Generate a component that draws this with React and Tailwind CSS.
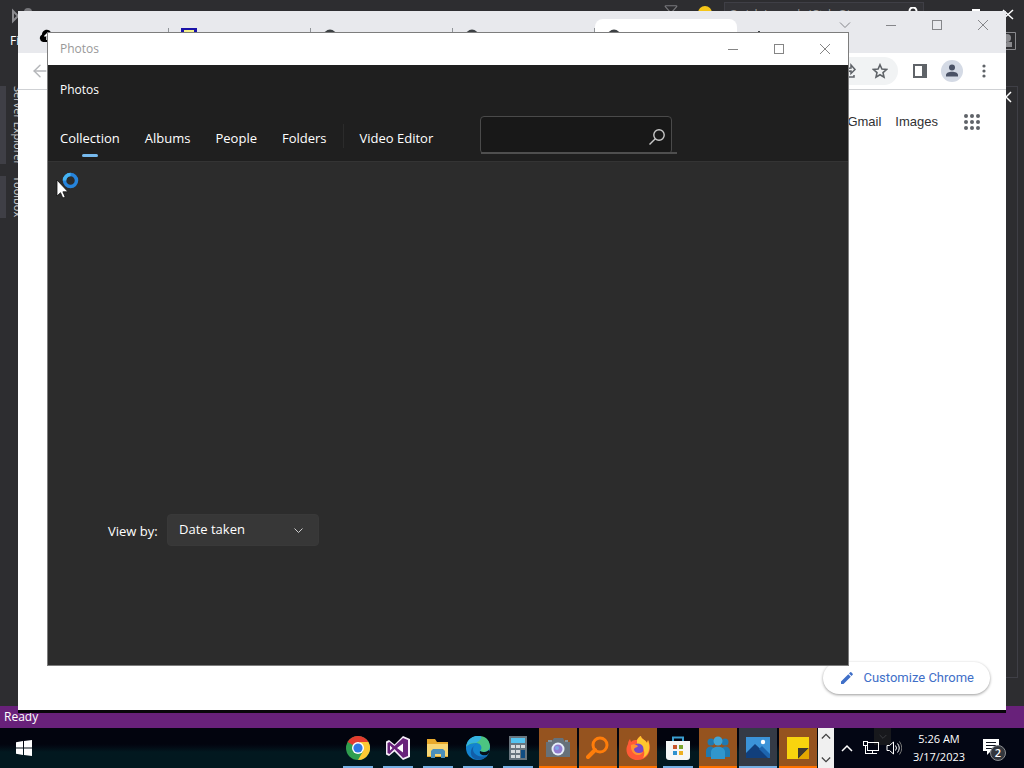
import React from "react";
import clsx from "clsx";
import { ArrowLeft, Filter } from "lucide-react";

const CaptionIcon = ({ type }) => (
  <svg width="12" height="12" viewBox="0 0 12 12" fill="none" stroke="currentColor" shapeRendering={type === "close" || type === "menu" ? "auto" : "crispEdges"}>
    {type === "menu" && <path d="M1 3.5l5 5 5-5" />}
    {type === "minimize" && <path d="M1 6.5h10" />}
    {type === "maximize" && <path d="M1.5 1.5h9v9h-9z" />}
    {type === "close" && <path d="M1 1l10 10M11 1L1 11" />}
  </svg>
);

const CaptionButtons = ({ types, className }) => (
  <div className={clsx("ml-auto flex", className)}>
    {types.map((type) => (
      <button key={type} aria-label={type} className="flex w-[46px] items-center justify-center">
        <CaptionIcon type={type} />
      </button>
    ))}
  </div>
);

/* ---------- Visual Studio, behind everything ---------- */

const sideTabs = [
  { label: "Server Explorer", height: "h-[78px]" },
  { label: "Toolbox", height: "h-[42px]" },
];

const StudioWindow = () => (
  <div className="flex min-h-0 flex-1 flex-col bg-[#2d2d30] text-white">
    <div className="flex h-7 items-start pl-3">
      <svg className="mt-2 h-4 w-6" viewBox="0 0 24 16" fill="none" stroke="#8b8b8f" strokeWidth="2">
        <path d="M1 3v10l5-5zM7 3v10" />
        <circle cx="16" cy="4" r="4" fill="#77777b" stroke="none" />
      </svg>
      <div className="ml-auto flex items-start">
        <Filter className="mt-1 mr-5 h-3.5 w-3.5 text-[#77777b]" />
        <span className="mt-1.5 mr-3 h-3.5 w-3.5 rounded-full bg-[#f5c518]" />
        <div className="mt-[2px] flex h-6 w-[200px] items-start justify-between border border-[#3f3f46] bg-[#333337] px-1 pt-1">
          <span className="text-[12px] leading-4 text-[#999999]">Quick Launch (Ctrl+Q)</span>
          <svg width="12" height="12" viewBox="0 0 12 12" fill="none" stroke="#fff" strokeWidth="2">
            <circle cx="6" cy="4" r="3.5" />
            <path d="M3 7l-3 4" />
          </svg>
        </div>
        <span className="mt-[9px] ml-12 h-2 w-2 border-t-2 border-white" />
        <svg className="mt-2 mr-2.5 ml-[22px]" width="12" height="12" viewBox="0 0 12 12" fill="none" stroke="#fff" strokeWidth="1.5">
          <path d="M1 2l10 9M11 2L1 11" />
        </svg>
      </div>
    </div>
    <div className="flex h-[58px] items-start justify-between pt-1 pl-2.5 text-[12px] leading-[18px]">
      <span>File</span>
      <svg className="mr-2" width="18" height="18" viewBox="0 0 18 18">
        <path d="M1 .5h16.500v17H1" fill="none" stroke="#8a8a8e" />
        <circle cx="9" cy="6" r="4" fill="#8a8a8e" />
        <path d="M5 15v-3l4-2h5v5z" fill="#8a8a8e" />
      </svg>
    </div>
    <div className="flex flex-1">
      <div className="flex flex-col gap-3">
        {sideTabs.map(({ label, height }) => (
          <div key={label} className={clsx("flex border-l-[6px] border-[#3f3f46] pl-1", height)}>
            <span className="text-[11px] leading-4 whitespace-nowrap text-[#d0d0d0] [writing-mode:vertical-rl]">{label}</span>
          </div>
        ))}
      </div>
      <div className="mr-1.5 mb-7 ml-auto w-3 border border-l-0 border-[#3f3f46]">
        <svg className="mt-1 h-3 w-2" viewBox="0 0 8 12" fill="none" stroke="#fff" strokeWidth="1.5">
          <path d="M5 1L0 6l5 5" />
        </svg>
      </div>
    </div>
    <div className="flex h-[22px] items-center bg-[#68217a] px-1 text-[12px]">Ready</div>
  </div>
);

/* ---------- Chrome ---------- */

const CloudIcon = () => (
  <svg width="16" height="16" viewBox="0 0 16 16">
    <path d="M4 14a4 4 0 0 1-1-7.500C3 1 11 0 12 5c5 1 5 9 0 9z" fill="#000" />
    <path d="M8 12V6M5.500 8.500L8 6l2.500 2.500" stroke="#fff" strokeWidth="1.500" fill="none" />
  </svg>
);

const PageIcon = () => (
  <svg width="16" height="16" viewBox="0 0 16 16">
    <path d="M0 0h16v16H0z" fill="#1a12a8" />
    <path d="M3 2h10v3H3z" fill="#f4f08a" />
  </svg>
);

const GlobeIcon = () => (
  <svg width="14" height="14" viewBox="0 0 14 14">
    <circle cx="7" cy="7" r="6.500" fill="#3c4043" />
    <circle cx="7" cy="7" r="3" fill="#e8eaed" />
  </svg>
);

const browserTabs = [
  { title: "Make donati", icon: CloudIcon },
  { title: "Visual Applic", icon: PageIcon },
  { title: "New Tab", icon: GlobeIcon },
  { title: "New Tab", icon: GlobeIcon },
  { title: "New Tab", icon: GlobeIcon, active: true },
];

const BrowserTab = ({ title, icon: Icon, active }) => (
  <div
    className={clsx(
      "flex h-[34px] w-[142px] items-center px-3 text-[12px] text-[#5c6064]",
      active && "rounded-t-lg bg-white"
    )}
  >
    <Icon />
    <span className="ml-1.5 flex-1 pt-1 whitespace-nowrap">{title}</span>
    <svg width="8" height="8" viewBox="0 0 8 8" stroke="currentColor">
      <path d="M0 0l8 8M8 0L0 8" />
    </svg>
    {!active && <span className="-mr-3 ml-3 h-4 w-px bg-[#909498]" />}
  </div>
);

const ChromeWindow = () => (
  <section className="absolute top-[11px] right-[18px] bottom-[58px] left-[18px] flex flex-col bg-white shadow-[0_3px_0_#08060a]">
    <div className="flex h-[42px] items-end bg-[#e8e9ed] pl-[9px]">
      {browserTabs.map((tab, i) => (
        <BrowserTab key={i} {...tab} />
      ))}
      <button aria-label="New tab" className="mb-2.5 ml-4 text-[#3c4043]">
        <svg width="12" height="12" viewBox="0 0 12 12" stroke="currentColor" strokeWidth="2">
          <path d="M6 0v12M0 6h12" />
        </svg>
      </button>
      <CaptionButtons types={["menu", "minimize", "maximize", "close"]} className="h-7 self-start text-[#85868a]" />
    </div>
    <div className="flex h-[37px] items-center border-b border-[#cfd1d4] pr-1.5 pl-3 text-[#5f6368]">
      <ArrowLeft className="h-5 w-5 text-[#b5b7ba]" strokeWidth={1.75} />
      <div className="mr-1.5 ml-[86px] flex h-7 flex-1 items-center justify-end rounded-full bg-[#f1f3f4] pr-1">
        <button aria-label="Share" className="flex w-8 justify-center">
          <svg width="16" height="16" viewBox="0 0 16 16" fill="none" stroke="currentColor" strokeWidth="1.500">
            <path d="M4 10c0-4 2-5 5-5V2l4 4.500-4 4V8c-2 0-4 0-5 2zM2 6v8h10v-2" />
          </svg>
        </button>
        <button aria-label="Bookmark" className="flex w-7 justify-center">
          <svg width="16" height="16" viewBox="0 0 16 16" fill="none" stroke="currentColor" strokeWidth="1.600">
            <path d="M8 1.800l1.900 4.300 4.600.4-3.500 3.100 1 4.600L8 11.800l-4 2.400 1-4.600-3.500-3.100 4.600-.4z" />
          </svg>
        </button>
      </div>
      <button aria-label="Side panel" className="flex w-8 justify-center">
        <svg width="14" height="14" viewBox="0 0 14 14">
          <path d="M1 1h12v12H1z" fill="none" stroke="currentColor" strokeWidth="2" />
          <path d="M9 0h5v14H9z" fill="currentColor" />
        </svg>
      </button>
      <button aria-label="Profile" className="flex w-8 justify-center">
        <svg width="22" height="22" viewBox="0 0 22 22">
          <circle cx="11" cy="11" r="11" fill="#d4dae5" />
          <circle cx="11" cy="7.500" r="3" fill="#4a5266" />
          <path d="M5 16.500v-1.500c0-4.500 12-4.500 12 0v1.500z" fill="#4a5266" />
        </svg>
      </button>
      <button aria-label="Menu" className="flex w-8 justify-center">
        <svg width="4" height="14" viewBox="0 0 4 14" fill="currentColor">
          <circle cx="2" cy="2" r="1.600" />
          <circle cx="2" cy="7" r="1.600" />
          <circle cx="2" cy="12" r="1.600" />
        </svg>
      </button>
    </div>
    <div className="flex flex-1 flex-col items-end justify-between p-4">
      <nav className="flex h-8 items-center gap-3.5 pr-2.5 font-['Liberation_Sans',sans-serif] text-[13px] text-[#303133]">
        <a href="#gmail">Gmail</a>
        <a href="#images">Images</a>
        <button aria-label="Google apps" className="ml-3">
          <svg width="16" height="16" viewBox="0 0 16 16" fill="#5f6368">
            {[2, 8, 14].map((y) => [2, 8, 14].map((x) => <circle key={`${x}-${y}`} cx={x} cy={y} r="2" />))}
          </svg>
        </button>
      </nav>
      <button className="flex h-8 items-center gap-2 rounded-full bg-white px-4 font-[Roboto,sans-serif] text-[13px] text-[#3f6fc8] shadow-[0_1px_3px_rgba(0,0,0,0.4)]">
        <svg width="16" height="16" viewBox="0 0 16 16" fill="currentColor">
          <path d="M2 11.500V14h2.500l7.300-7.300-2.500-2.500zM13.700 4.800a.8.8 0 0 0 0-1.100l-1.400-1.400a.8.8 0 0 0-1.100 0L10 3.500 12.500 6z" />
        </svg>
        Customize Chrome
      </button>
    </div>
  </section>
);

/* ---------- Photos ---------- */

const photoTabs = ["Collection", "Albums", "People", "Folders"];

const PhotosWindow = () => (
  <section className="absolute top-[32px] right-[175px] bottom-[102px] left-[47px] flex flex-col border border-[#7d7d7d] bg-[#2c2c2c] text-white">
    <div className="flex h-8 bg-white pl-3 text-[12px] text-[#999999]">
      <span className="self-center">Photos</span>
      <CaptionButtons types={["minimize", "maximize", "close"]} className="text-[#858585]" />
    </div>
    <header className="flex h-[97px] flex-col border-b border-[#343434] bg-[#1f1f1f] px-3">
      <h1 className="pt-4 text-[12px] leading-[18px]">Photos</h1>
      <div className="mt-[17px] flex items-start text-[13px] leading-5">
        <nav className="flex gap-[25px]">
          {photoTabs.map((label, i) => (
            <a key={label} href={`#${label.toLowerCase()}`} className="relative pt-3 pb-[9px]">
              {label}
              {i === 0 && <span className="absolute inset-x-0 bottom-0 mx-auto h-[3px] w-4 rounded-full bg-[#76b9ed]" />}
            </a>
          ))}
        </nav>
        <span className="mx-4 mt-2 h-6 w-px bg-[#2b2b2b]" />
        <a href="#video-editor" className="pt-3">Video Editor</a>
        <label className="relative ml-[47px] flex h-[38px] w-48 items-center rounded-[4px] border border-[#4a4a4a] bg-[#181818] pr-1.5">
          <input type="text" aria-label="Search" className="w-full min-w-0 flex-1 bg-transparent px-2 outline-none" />
          <svg className="mt-1" width="16" height="16" viewBox="0 0 16 16" fill="none" stroke="#c8c8c8" strokeWidth="1.400">
            <circle cx="10" cy="6" r="5.200" />
            <path d="M6.300 9.700L.5 15.500" />
          </svg>
          <span className="absolute -right-1.5 -bottom-px left-0 h-0.5 bg-[#4f4f4f]" />
        </label>
      </div>
    </header>
    <div className="flex flex-1 items-end pb-[119px] pl-[60px] text-[13px]">
      <label htmlFor="view-by" className="w-[59px] leading-[30px]">View by:</label>
      <div className="relative">
        <select id="view-by" className="h-8 w-[152px] appearance-none rounded-[4px] border border-[#393939] bg-[#373737] px-[11px]">
          <option>Date taken</option>
        </select>
        <svg className="pointer-events-none absolute top-3 right-4" width="9" height="9" viewBox="0 0 9 9" fill="none" stroke="#cfcfcf">
          <path d="M.5 2.500l4 4 4-4" />
        </svg>
      </div>
    </div>
  </section>
);

const BusyCursor = () => (
  <svg className="pointer-events-none absolute top-[172px] left-[56px]" width="24" height="30" viewBox="0 0 24 30">
    <circle cx="14.500" cy="8.500" r="6" fill="none" stroke="#2684dc" strokeWidth="3.500" />
    <path d="M8.500 8.500a6 6 0 0 1 6-6" fill="none" stroke="#46b4f2" strokeWidth="3.500" />
    <path d="M1 8v16l3.500-3.300 2.300 5.300 2.400-1-2.300-5.200H12z" fill="#fff" stroke="#111" strokeWidth="0.800" />
  </svg>
);

/* ---------- Taskbar ---------- */

const appIcons = {
  Chrome: (
    <>
      <circle cx="12" cy="12" r="12" fill="#2f9e4f" />
      <path d="M12 12L1.600 6A12 12 0 0 1 22.400 6z" fill="#e33b2e" />
      <path d="M22.400 6A12 12 0 0 1 12 24l5.200-9L14 6z" fill="#fcc934" />
      <circle cx="12" cy="12" r="6" fill="#fff" />
      <circle cx="12" cy="12" r="4.600" fill="#2f78e4" />
    </>
  ),
  "Visual Studio": (
    <>
      <path d="M17 0l7 3v18l-7 3-8.500-8.500L3 20l-3-1.500v-13L3 4l5.500 4.500z" fill="#f5eef8" />
      <path d="M17 2l5 2v16l-5 2-8.500-9L3.500 18 1.500 17V7l2-1 5 4z" fill="#68217a" />
      <path d="M17 7.500v9L11 12zM4 9.500v5L6.500 12z" fill="#fff" />
    </>
  ),
  "File Explorer": (
    <>
      <path d="M1 3h8l2 3h11v15H1z" fill="#e8a92c" />
      <path d="M1 8h21v12H1z" fill="#f7d675" />
      <path d="M5 22v-7l2-2h10l2 2v7h-4v-4H9v4z" fill="#4b8fbb" />
    </>
  ),
  Edge: (
    <>
      <circle cx="12" cy="12" r="12" fill="#1383cf" />
      <path d="M2 6C6-2 23-3 24 10c0 6-7 7-10 5 3-3 1-8-4-8-4 0-7 1-9 3z" fill="#4cc481" />
      <path d="M0 11C1 3 7-1 14 0c3 1 0 5-4 7-4-1-8 1-10 4z" fill="#35b2e0" />
      <path d="M10 8c-7 5-1 15 11 12-8 8-20 2-15-8z" fill="#125ea8" />
      <path d="M14 15c3 2 7 1 9-1l1 2-3 3c-5 1-8-1-7-4z" fill="#071019" />
    </>
  ),
  Calculator: (
    <>
      <path d="M3 0h18v24H3z" fill="#69757e" />
      <path d="M5 2h14v5H5z" fill="#54c3f0" />
      <path d="M5 9h4v3H5zm5 0h4v3h-4zm5 0h4v3h-4zM5 14h4v3H5zm5 0h4v3h-4zM5 19h4v3H5zm5 0h4v3h-4z" fill="#d6dadd" />
      <path d="M15 14h4v8h-4z" fill="#0f4c81" />
    </>
  ),
  Camera: (
    <>
      <path d="M0 6h5l3-4h9l2 4h5v15H0z" fill="#66717a" />
      <path d="M2 4h4v2H2zM19 4h3v2h-3z" fill="#89949b" />
      <circle cx="12" cy="13" r="6.500" fill="#e5edf8" />
      <circle cx="12" cy="13" r="4.500" fill="#927bce" />
      <circle cx="11" cy="12" r="2" fill="#7ea8e6" />
    </>
  ),
  Search: (
    <>
      <circle cx="14" cy="9" r="7" fill="none" stroke="#ff7d0a" strokeWidth="3" />
      <path d="M9 14l-7 7" stroke="#ff7d0a" strokeWidth="4" strokeLinecap="round" />
    </>
  ),
  Firefox: (
    <>
      <path d="M2 8c0-2 1-4 2-5l1 3c2-2 4-2 6-2 1-2 3-4 4-4 0 3 5 4 6 7l1-3c5 9 0 20-10 20C2 24-2 15 2 8z" fill="#ff5a36" />
      <path d="M11 4c1-2 3-4 4-4 0 3 5 4 6 7l1-3c3 8 1 15-5 18 3-6 1-11-6-12z" fill="#ffc52e" />
      <circle cx="12" cy="13" r="5.500" fill="#7647c7" />
      <path d="M5 9c3-2 6 0 7 1-1 2-3 1-4 3 0 4 5 5 9 3-3 6-13 3-12-7z" fill="#ff9230" />
    </>
  ),
  Store: (
    <>
      <path d="M7 6V1.500h10V6" fill="none" stroke="#3a9ed0" strokeWidth="2" />
      <path d="M0 5h24v16a3 3 0 0 1-3 3H3a3 3 0 0 1-3-3z" fill="#f5f6f7" />
      <path d="M7 9h4v4H7z" fill="#c8562e" />
      <path d="M13 9h4v4h-4z" fill="#79a52e" />
      <path d="M7 15h4v4H7z" fill="#2e91d0" />
      <path d="M13 15h4v4h-4z" fill="#edb023" />
    </>
  ),
  People: (
    <>
      <g fill="#2079b0">
        <circle cx="5" cy="6" r="3.500" />
        <circle cx="19" cy="6" r="3.500" />
        <path d="M0 21v-6c0-6 9-6 9 0v6zM15 21v-6c0-6 9-6 9 0v6z" />
      </g>
      <circle cx="12" cy="5" r="4.500" fill="#43a4d4" />
      <path d="M5 23v-7c0-7 14-7 14 0v7z" fill="#3096cd" />
    </>
  ),
  Photos: (
    <>
      <path d="M0 1h24v21H0z" fill="#3b93d8" />
      <path d="M0 17l9-9 15 14H0z" fill="#113f7c" />
      <path d="M13 13l3-3 8 8v4h-2z" fill="#1d65ae" />
      <circle cx="17" cy="6" r="2.200" fill="#fff" />
    </>
  ),
  "Sticky Notes": (
    <>
      <path d="M1 1h22v22H1z" fill="#f8d40e" />
      <path d="M12 12h11L12 23z" fill="#3f3a2f" />
      <path d="M23 12v11H12z" fill="#e3a800" />
    </>
  ),
};

const apps = [
  { name: "Chrome" },
  { name: "Visual Studio" },
  { name: "File Explorer" },
  { name: "Edge" },
  { name: "Calculator" },
  { name: "Camera", alert: true },
  { name: "Search", alert: true },
  { name: "Firefox", alert: true },
  { name: "Store" },
  { name: "People", alert: true },
  { name: "Photos", focused: true },
  { name: "Sticky Notes", alert: true },
];

const AppButton = ({ name, alert, focused }) => (
  <button
    aria-label={name}
    className={clsx(
      "flex w-[38px] flex-col items-center justify-between pt-2",
      alert && "bg-[#95531f]",
      focused && "bg-[#343a45]"
    )}
  >
    <svg width="24" height="24" viewBox="0 0 24 24">
      {appIcons[name]}
    </svg>
    <span className={clsx("h-0.5", alert ? "w-full bg-[#ff7200]" : focused ? "w-full bg-[#76b0e4]" : "w-[30px] bg-[#76b0e4]")} />
  </button>
);

const Chevron = ({ down, className }) => (
  <svg className={className} width="12" height="8" viewBox="0 0 12 8" fill="none" stroke="currentColor" strokeWidth="1.500">
    <path d={down ? "M1 1l5 5 5-5" : "M1 7l5-5 5 5"} />
  </svg>
);

const Taskbar = () => (
  <footer className="flex h-10 bg-linear-to-b from-[#02040e] from-40% to-[#02181f] to-60% text-white">
    <button aria-label="Start" className="flex w-12 items-center justify-center">
      <svg width="16" height="16" viewBox="0 0 16 16" fill="#fff">
        <path d="M0 2.200L7 1v6.500H0zM8 1l8-1v7.500H8zM0 8.500h7V15l-7-1.200zM8 8.500h8V16l-8-1z" />
      </svg>
    </button>
    <div className="ml-auto flex gap-0.5">
      {apps.map((app) => (
        <AppButton key={app.name} {...app} />
      ))}
    </div>
    <div className="ml-px flex w-4 flex-col items-center justify-between bg-[#f0f0f0] py-1 text-[#404040]">
      <Chevron className="w-2.5" />
      <Chevron down className="w-2.5" />
    </div>
    <div className="relative flex items-center bg-[#030614]">
      {/* leftover of the overflow flyout above the tray */}
      <span className="absolute top-0 left-10 flex h-[17px] w-[17px] items-center justify-center bg-[#17181c] text-[#3a3b3f]">
        <Chevron down className="w-2" />
      </span>
      <button aria-label="Show hidden icons" className="flex w-[26px] justify-center">
        <Chevron />
      </button>
      <svg className="relative ml-0.5" width="18" height="16" viewBox="0 0 18 16" fill="none" stroke="#fff" shapeRendering="crispEdges">
        <path d="M5.500 2.500h11v8h-11zM10.500 10.500v3M7 13.500h8M1.500 1.500h4v4h-4zM3.500 6v7.500H7" />
      </svg>
      <svg className="relative ml-1.5" width="16" height="16" viewBox="0 0 16 16" fill="none" stroke="#fff">
        <path d="M1 5.500h2.500l4-3.500v12l-4-3.500H1zM9.500 5.500q2 2.500 0 5M11.500 3.500q3.500 4.500 0 9" />
        <path d="M13.500 1.500q4.500 6.500 0 13" stroke="#777" />
      </svg>
      <time className="ml-1 w-[66px] text-center text-[11px] leading-[18px]">
        5:26 AM
        <br />
        3/17/2023
      </time>
      <button aria-label="Notifications" className="flex w-[52px] justify-center pr-2">
        <svg width="26" height="26" viewBox="0 0 26 26">
          <path d="M2 4h16v12h-8l-4 4v-4H2z" fill="#fff" />
          <path d="M5 7.500h10M5 10.500h10M5 13.500h6" stroke="#111521" />
          <circle cx="17" cy="18" r="7.500" fill="#33363d" stroke="#8c8e92" />
          <text x="17" y="22" fill="#fff" fontSize="11" fontWeight="600" textAnchor="middle">2</text>
        </svg>
      </button>
    </div>
  </footer>
);

export default function App() {
  return (
    <main className="relative flex h-screen flex-col overflow-hidden bg-[#2d2d30] font-['Open_Sans','Noto_Sans',sans-serif]">
      <StudioWindow />
      <ChromeWindow />
      <PhotosWindow />
      <BusyCursor />
      <Taskbar />
    </main>
  );
}
